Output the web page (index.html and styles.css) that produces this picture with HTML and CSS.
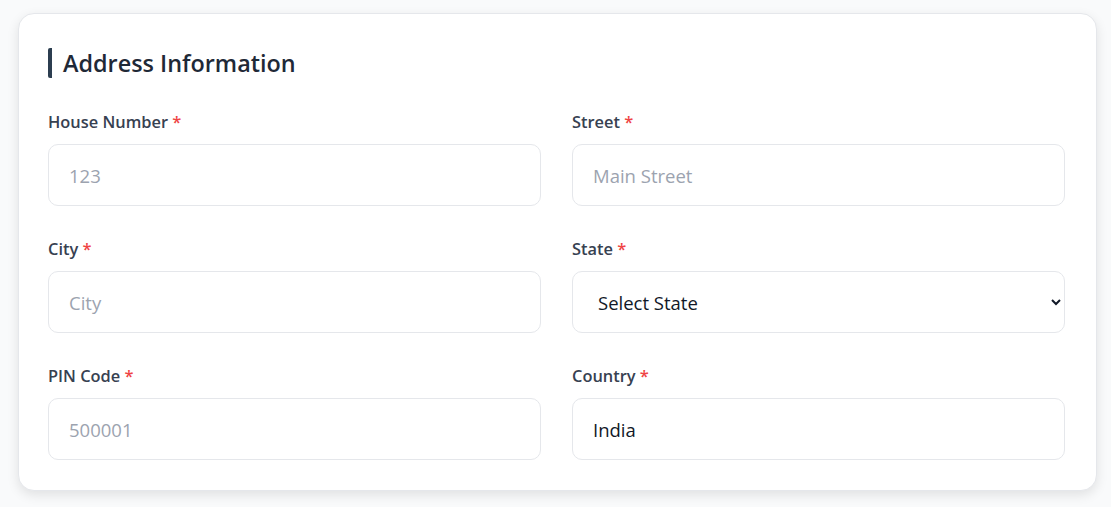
FILE: index.html
```html
<!DOCTYPE html>
<html lang="en">
<head>
  <meta charset="UTF-8">
  <meta name="viewport" content="width=device-width, initial-scale=1.0">
  <title>Address Information</title>
  <link rel="stylesheet" href="styles.css">
</head>
<body>
  <div class="page">
    <div class="card">
      <h2 class="sectionTitle">Address Information</h2>
      <div class="formGrid">
        <div class="field">
          <label for="house">House Number <span class="req">*</span></label>
          <input type="text" id="house" placeholder="123">
        </div>
        <div class="field">
          <label for="street">Street <span class="req">*</span></label>
          <input type="text" id="street" placeholder="Main Street">
        </div>
        <div class="field">
          <label for="city">City <span class="req">*</span></label>
          <input type="text" id="city" placeholder="City">
        </div>
        <div class="field">
          <label for="state">State <span class="req">*</span></label>
          <select id="state">
            <option>Select State</option>
            <option>Telangana</option>
            <option>Andhra Pradesh</option>
            <option>Karnataka</option>
          </select>
        </div>
        <div class="field">
          <label for="pin">PIN Code <span class="req">*</span></label>
          <input type="text" id="pin" placeholder="500001">
        </div>
        <div class="field">
          <label for="country">Country <span class="req">*</span></label>
          <input type="text" id="country" value="India">
        </div>
      </div>
    </div>
  </div>
</body>
</html>
```
FILE: styles.css
```css
body {
  margin: 0;
  background: #f9fafb;
  font-family: "Open Sans", "Noto Sans", sans-serif;
  color: #1f2937;
}
.page {
  padding: 13px 14px 16px 18px;
}
.card {
  background: #fff;
  border: 1px solid #e5e7eb;
  border-radius: 16px;
  box-shadow: 0 4px 12px rgba(0, 0, 0, .1);
  padding: 34px 31px 30px 29px;
}
.sectionTitle {
  margin: 0 0 32px;
  font-size: 23.4px;
  font-weight: 600;
  line-height: 30px;
  color: #1f2937;
  border-left: 4px solid #2c3e50;
  border-radius: 2px;
  padding-left: 11px;
}
.formGrid {
  display: grid;
  grid-template-columns: 1fr 1fr;
  column-gap: 31px;
  row-gap: 31px;
}
.field label {
  display: block;
  font-size: 16.4px;
  font-weight: 600;
  line-height: 24px;
  color: #374151;
  margin-bottom: 10px;
}
.req {
  color: #ef4444;
}
.field input,
.field select {
  box-sizing: border-box;
  width: 100%;
  height: 62px;
  border: 1px solid #e5e7eb;
  border-radius: 10px;
  padding: 0 20px;
  font-family: inherit;
  font-size: 18.5px;
  color: #111827;
  background: #fff;
  outline: none;
}
.field select {
  padding-left: 21px;
}
.field input::placeholder {
  color: #9ca3af;
}
```
